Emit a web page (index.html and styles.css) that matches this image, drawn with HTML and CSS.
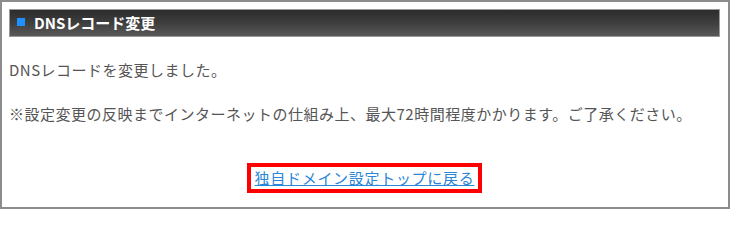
FILE: index.html
```html
<!DOCTYPE html>
<html lang="ja">
<head>
<meta charset="utf-8">
<link rel="stylesheet" href="styles.css">
</head>
<body>
<div class="panel">
  <h2 class="panel-title"><span class="marker"></span>DNSレコード変更</h2>
  <p class="msg">DNSレコードを変更しました。</p>
  <p class="msg">※設定変更の反映までインターネットの仕組み上、最大72時間程度かかります。ご了承ください。</p>
  <div class="back">
    <span class="back-box"><a href="#" class="back-link">独自ドメイン設定トップに戻る</a></span>
  </div>
</div>
</body>
</html>
```
FILE: styles.css
```css
html, body {
  margin: 0;
  padding: 0;
  background: #fff;
}
body {
  font-family: "Noto Sans CJK JP", "Noto Sans", sans-serif;
  color: #555;
}
.panel {
  box-sizing: border-box;
  width: 730px;
  height: 209px;
  border: 2px solid #8c8c8c;
  padding: 7px 8px 0 7px;
}
.panel-title {
  margin: 0;
  height: 28px;
  box-sizing: border-box;
  border: 1px solid #9a9a9a;
  background: linear-gradient(to bottom, #2c2c2c 0%, #3e3e3e 50%, #595959 100%);
  color: #fff;
  font-size: 15px;
  font-weight: 700;
  line-height: 26px;
  display: flex;
  align-items: center;
  padding-left: 7px;
}
.marker {
  width: 8px;
  height: 8px;
  background: #1e90ff;
  margin-right: 9px;
  margin-top: -3px;
}
.msg {
  margin: 22px 0 0;
  font-size: 15px;
  line-height: 22px;
  letter-spacing: 0.5px;
}
.back {
  margin-top: 38px;
  text-align: center;
  line-height: 0;
}
.back-box {
  display: inline-block;
  border: 4px solid #ff0000;
  padding: 0 4px;
  line-height: 22px;
  font-size: 15px;
  letter-spacing: 0.7px;
}
.back-link {
  color: #2a86d8;
  text-decoration: underline;
}
```
